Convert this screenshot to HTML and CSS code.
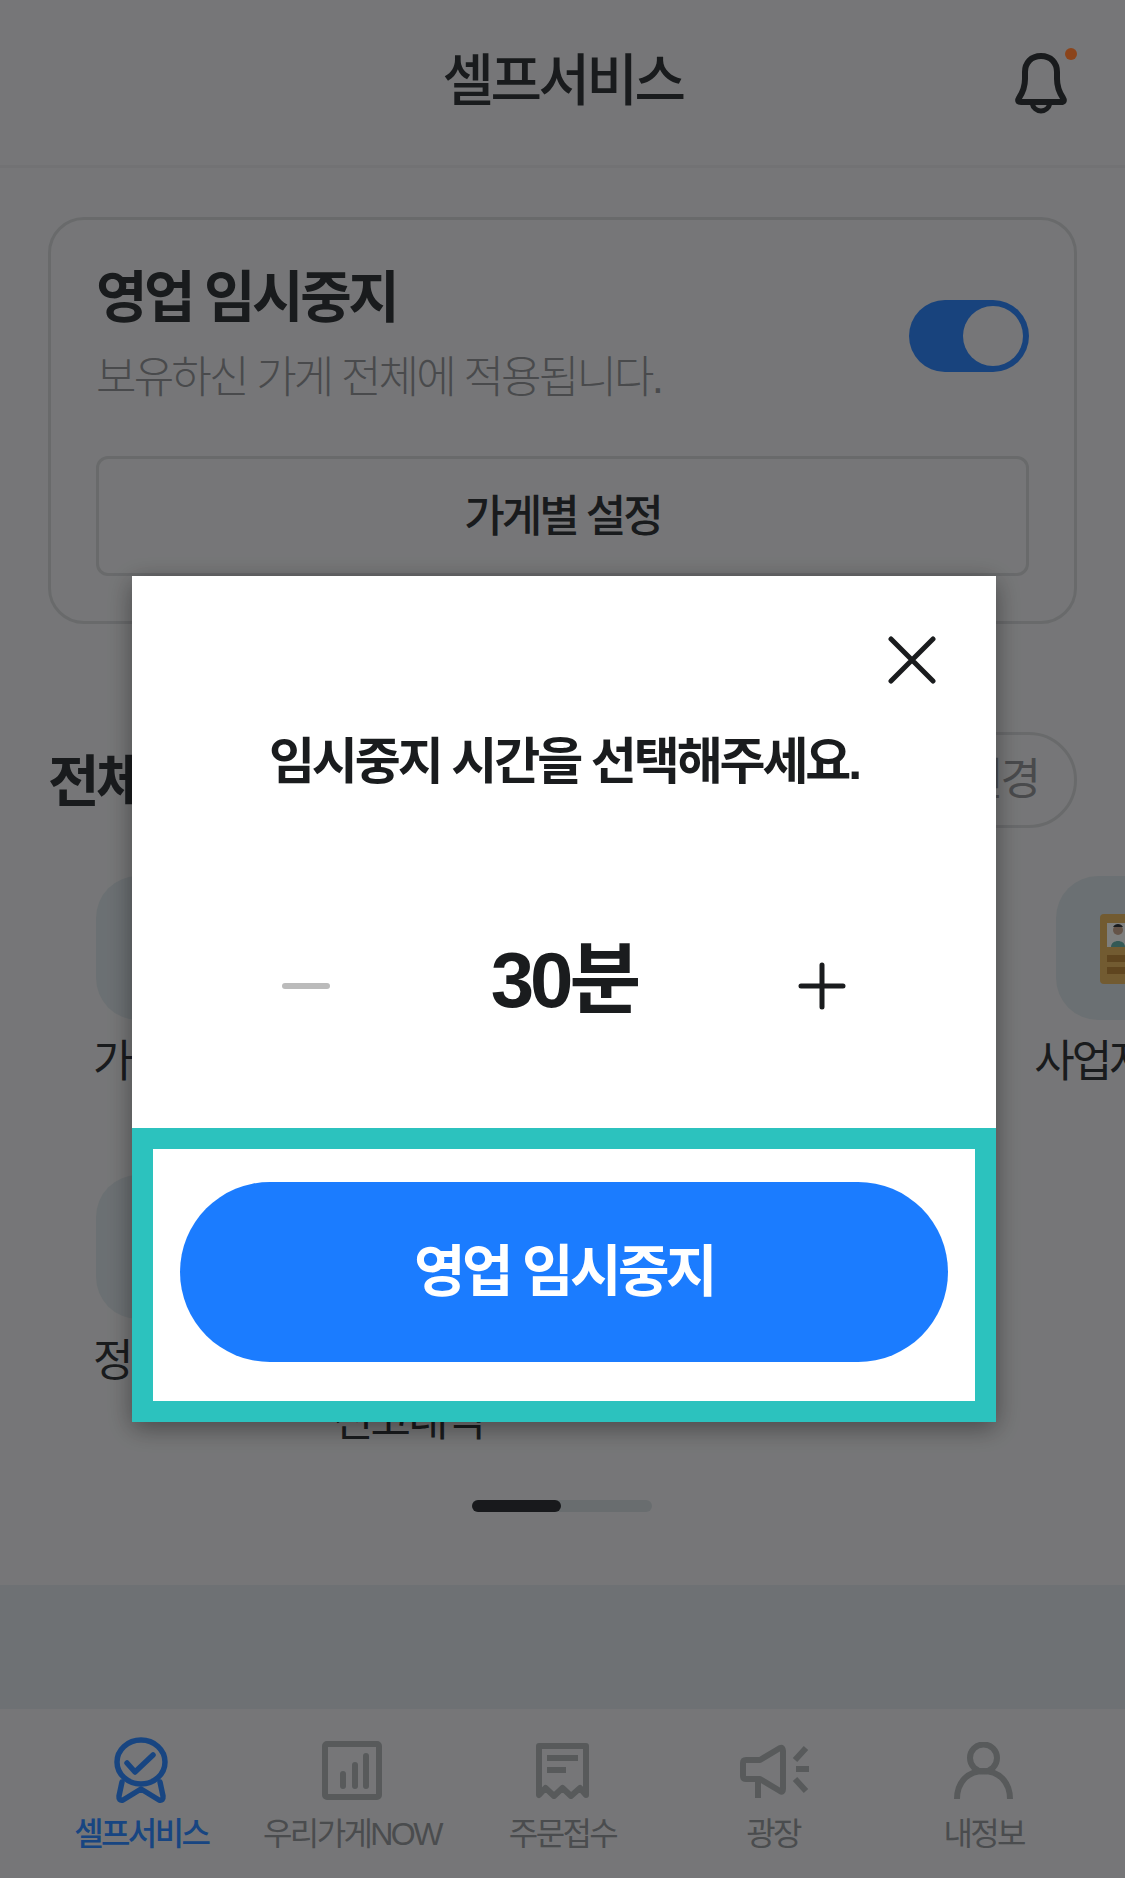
FILE: index.html
```html
<!DOCTYPE html>
<html lang="ko">

<head>
    <meta charset="utf-8">
    <title>셀프서비스</title>
    <link rel="stylesheet" href="styles.css">
</head>

<body>
    <div class="page">
        <header class="top-bar">
            <h1 class="top-title">셀프서비스</h1>
            <div class="bell">
                <svg width="54" height="61" viewBox="0 0 54 61" fill="none" stroke="#2f3236" stroke-width="6" stroke-linejoin="round">
                    <path d="M27 3C17 3 11 10 11 19V26C11 33 9 39 5 45C3.5 47.5 4 49 7 49H47C50 49 50.5 47.5 49 45C45 39 43 33 43 26V19C43 10 37 3 27 3Z" />
                    <path d="M18 50C19 55 23 58 27 58C31 58 35 55 36 50" stroke-width="5" />
                </svg>
                <span class="bell-dot"></span>
            </div>
        </header>

        <main class="content">
            <section class="pause-card">
                <div class="pause-row">
                    <div>
                        <h2 class="pause-title">영업 임시중지</h2>
                        <p class="pause-desc">보유하신 가게 전체에 적용됩니다.</p>
                    </div>
                    <div class="toggle"><span class="toggle-knob"></span></div>
                </div>
                <button class="store-btn">가게별 설정</button>
            </section>

            <div class="section-head">
                <h2 class="section-title">전체 서비스</h2>
                <button class="edit-btn">변경</button>
            </div>

            <div class="service-grid">
                <div class="service">
                    <div class="service-icon"></div>
                    <div class="service-name">가게정보</div>
                </div>
                <div class="service">
                    <div class="service-icon"></div>
                    <div class="service-name">메뉴관리</div>
                </div>
                <div class="service">
                    <div class="service-icon"></div>
                    <div class="service-name">리뷰관리</div>
                </div>
                <div class="service">
                    <div class="service-icon"></div>
                    <div class="service-name">광고관리</div>
                </div>
                <div class="service">
                    <div class="service-icon">
                        <svg class="license" width="69" height="70" viewBox="0 0 69 70">
                            <rect width="69" height="70" rx="4" fill="#cfa659" />
                            <rect x="7" y="9" width="22" height="24" fill="#e6e8e6" />
                            <circle cx="18" cy="16" r="5" fill="#b89a84" />
                            <path d="M11 33C11 25 25 25 25 33Z" fill="#5fa39b" />
                            <path d="M13 13C15 9 21 9 23 13Z" fill="#2f3236" />
                            <rect x="7" y="41" width="50" height="7" fill="#ad7f3a" />
                            <rect x="7" y="53" width="50" height="7" fill="#ad7f3a" />
                        </svg>
                    </div>
                    <div class="service-name">사업자정보</div>
                </div>
                <div class="service">
                    <div class="service-icon"></div>
                    <div class="service-name">정산내역</div>
                </div>
                <div class="service">
                    <div class="service-icon"></div>
                    <div class="service-name">부가세<br>신고내역</div>
                </div>
            </div>

            <div class="pager"><span class="pager-thumb"></span></div>
        </main>

        <div class="band"></div>

        <nav class="tab-bar">
            <div class="tab tab-active">
                <div class="tab-icon">
                    <svg width="54" height="67" viewBox="0 0 54 67" fill="none" stroke="#2d7fec" stroke-width="5.5" stroke-linejoin="round" stroke-linecap="round">
                        <ellipse cx="27" cy="25" rx="24" ry="22" />
                        <path d="M13 26L21 35L39 18" />
                        <path d="M8 45L5 59Q4.5 64 9 63L27 52L45 63Q49.5 64 49 59L46 45" />
                    </svg>
                </div>
                <span>셀프서비스</span>
            </div>
            <div class="tab">
                <div class="tab-icon">
                    <svg width="60" height="59" viewBox="0 0 60 59" fill="none" stroke="#a0a4a7" stroke-width="6" stroke-linejoin="round" stroke-linecap="round">
                        <rect x="3" y="3" width="54" height="53" rx="2" />
                        <path d="M21 33V45M33 24V45M44 15V45" />
                    </svg>
                </div>
                <span>우리가게NOW</span>
            </div>
            <div class="tab">
                <div class="tab-icon">
                    <svg width="53" height="56" viewBox="0 0 53 56" fill="none" stroke="#a0a4a7" stroke-width="6" stroke-linejoin="round">
                        <path d="M3 3H50V52L44 45L35 53L26.5 45L18 53L9.5 45L3 52Z" />
                        <path d="M11 15H42M11 27H30" />
                    </svg>
                </div>
                <span>주문접수</span>
            </div>
            <div class="tab">
                <div class="tab-icon tab-icon-square">
                    <svg width="70" height="56" viewBox="0 0 70 56" fill="none" stroke="#a0a4a7" stroke-width="6" stroke-linejoin="round">
                        <path d="M6 17H20L40 5Q43 4 43 8V46Q43 50 40 48L20 36H6Q3 36 3 33V20Q3 17 6 17Z" />
                        <path d="M18 36V55M56 26H69M55 17L66 5M55 36L66 48" />
                    </svg>
                </div>
                <span>광장</span>
            </div>
            <div class="tab">
                <div class="tab-icon">
                    <svg width="59" height="57" viewBox="0 0 59 57" fill="none" stroke="#a0a4a7" stroke-width="6">
                        <circle cx="29.5" cy="16" r="13.5" />
                        <path d="M3 57C3 40 14 29 29.5 29C45 29 56 40 56 57" />
                    </svg>
                </div>
                <span>내정보</span>
            </div>
        </nav>
    </div>

    <div class="overlay">
        <div class="modal">
            <div class="modal-body">
                <div class="modal-close">
                    <svg width="48" height="48" viewBox="0 0 48 48" fill="none" stroke="#1a1c1e" stroke-width="5" stroke-linecap="round">
                        <path d="M3 3L45 45M45 3L3 45" />
                    </svg>
                </div>
                <h3 class="modal-title">임시중지 시간을 선택해주세요.</h3>
                <div class="stepper">
                    <svg width="48" height="48" viewBox="0 0 48 48" fill="none" stroke="#bbbbbb" stroke-width="6" stroke-linecap="round">
                        <path d="M3 24H45" />
                    </svg>
                    <div class="stepper-value">30분</div>
                    <svg width="48" height="48" viewBox="0 0 48 48" fill="none" stroke="#1a1c1e" stroke-width="5" stroke-linecap="round">
                        <path d="M3 24H45M24 3V45" />
                    </svg>
                </div>
            </div>
            <div class="modal-foot">
                <button class="confirm-btn">영업 임시중지</button>
            </div>
        </div>
    </div>
</body>

</html>
```

FILE: styles.css
```css
* {
    box-sizing: border-box;
}

body {
    margin: 0;
    height: 1878px;
    overflow: hidden;
    font-family: "Liberation Sans", "Noto Sans CJK KR", sans-serif;
    color: #2f3236;
    background-color: #d7d8da;
}

h1,
h2,
h3,
p {
    margin: 0;
}

button {
    font-family: inherit;
    background: none;
    padding: 0;
}

.page {
    width: 1125px;
    height: 1878px;
    overflow: hidden;
}

/* top bar */
.top-bar {
    height: 168px;
    border-bottom: 3px solid #cfd0d3;
    display: flex;
    justify-content: center;
    padding-top: 50px;
    position: relative;
}

.top-title {
    font-size: 56px;
    line-height: 62px;
    font-weight: 500;
    letter-spacing: -3.5px;
}

.bell {
    position: absolute;
    left: 1014px;
    top: 53px;
    line-height: 0;
}

.bell-dot {
    position: absolute;
    left: 51px;
    top: -5px;
    width: 12px;
    height: 12px;
    border-radius: 50%;
    background-color: #fd7d32;
}

/* main content */
.content {
    height: 1417px;
    padding: 49px 48px 0;
}

.pause-card {
    width: 1029px;
    height: 407px;
    border: 3px solid #bfc1c4;
    border-radius: 36px;
    padding: 45px 45px 0;
}

.pause-row {
    display: flex;
    justify-content: space-between;
    align-items: center;
    height: 191px;
    padding-bottom: 50px;
}

.pause-title {
    font-size: 56px;
    line-height: 70px;
    font-weight: 700;
    letter-spacing: -3.5px;
}

.pause-desc {
    font-size: 44px;
    line-height: 60px;
    font-weight: 300;
    letter-spacing: -2.8px;
    color: #85878b;
    margin-top: 15px;
}

.toggle {
    width: 120px;
    height: 72px;
    border-radius: 36px;
    background-color: #2d7ae3;
    padding: 6px 5px 6px 54px;
}

.toggle-knob {
    display: block;
    width: 60px;
    height: 60px;
    border-radius: 50%;
    background-color: #d7d8da;
}

.store-btn {
    display: block;
    width: 933px;
    height: 120px;
    border: 3px solid #bfc1c4;
    border-radius: 12px;
    padding-bottom: 6px;
    font-size: 44px;
    font-weight: 500;
    letter-spacing: -3px;
    color: #2f3236;
}

.section-head {
    display: flex;
    justify-content: space-between;
    align-items: center;
    height: 96px;
    margin-top: 108px;
}

.section-title {
    font-size: 56px;
    font-weight: 700;
    letter-spacing: -3.5px;
    margin-bottom: 8px;
}

.edit-btn {
    height: 96px;
    border: 3px solid #bfc1c4;
    border-radius: 48px;
    padding: 0 36px 8px;
    font-size: 44px;
    letter-spacing: -3px;
    color: #85878b;
}

.service-grid {
    display: grid;
    grid-template-columns: repeat(5, 240px);
    grid-auto-rows: 299px;
    margin-top: 48px;
}

.service {
    display: flex;
    flex-direction: column;
    align-items: center;
}

.service-icon {
    width: 144px;
    height: 144px;
    flex-shrink: 0;
    border-radius: 42px;
    background-color: #c4ccd1;
    overflow: hidden;
    padding: 38px 0 0 44px;
}

.license {
    display: block;
}

.service-name {
    margin-top: 12px;
    font-size: 44px;
    line-height: 60px;
    letter-spacing: -3px;
    text-align: center;
    white-space: nowrap;
}

.pager {
    width: 180px;
    height: 12px;
    border-radius: 6px;
    margin: 26px 0 0 424px;
    background-color: #bfc6cb;
}

.pager-thumb {
    display: block;
    width: 89px;
    height: 12px;
    border-radius: 6px;
    background-color: #2c2f33;
}

.band {
    height: 124px;
    background-color: #c8ced3;
}

/* bottom tabs */
.tab-bar {
    height: 169px;
    display: flex;
    padding: 28px 36px 0;
}

.tab {
    flex: 1;
    display: flex;
    flex-direction: column;
    align-items: center;
    font-size: 32px;
    line-height: 40px;
    font-weight: 400;
    letter-spacing: -2.6px;
    color: #888a8e;
}

.tab-active {
    color: #2d7fec;
    font-weight: 500;
}

.tab-icon {
    height: 67px;
    display: flex;
    align-items: center;
    margin-bottom: 10px;
}

.tab-icon-square {
    padding-left: 4px;
}

/* modal */
.overlay {
    position: fixed;
    inset: 0;
    background-color: rgba(0, 0, 0, 0.45);
    padding: 576px 129px 0 132px;
}

.modal {
    width: 864px;
    height: 846px;
    background-color: #fff;
    box-shadow: 0 6px 24px rgba(0, 0, 0, 0.4);
    display: flex;
    flex-direction: column;
}

.modal-body {
    height: 552px;
    position: relative;
    color: #1a1c1e;
}

.modal-close {
    position: absolute;
    right: 60px;
    top: 60px;
    line-height: 0;
}

.modal-title {
    padding-top: 153px;
    text-align: center;
    font-size: 50px;
    line-height: 66px;
    font-weight: 700;
    letter-spacing: -3.1px;
}

.stepper {
    display: flex;
    justify-content: space-between;
    align-items: center;
    margin-top: 141px;
    padding: 0 150px;
}

.stepper-value {
    font-size: 78px;
    line-height: 88px;
    font-weight: 700;
    letter-spacing: -4px;
    padding-bottom: 11px;
}

.modal-foot {
    flex: 1;
    border: 21px solid #2cc2be;
    padding: 33px 27px 39px;
}

.confirm-btn {
    display: block;
    width: 100%;
    height: 180px;
    border: none;
    border-radius: 90px;
    padding-bottom: 11px;
    background-color: #1b7cff;
    color: #fff;
    font-size: 56px;
    font-weight: 700;
    letter-spacing: -3.5px;
}
```
